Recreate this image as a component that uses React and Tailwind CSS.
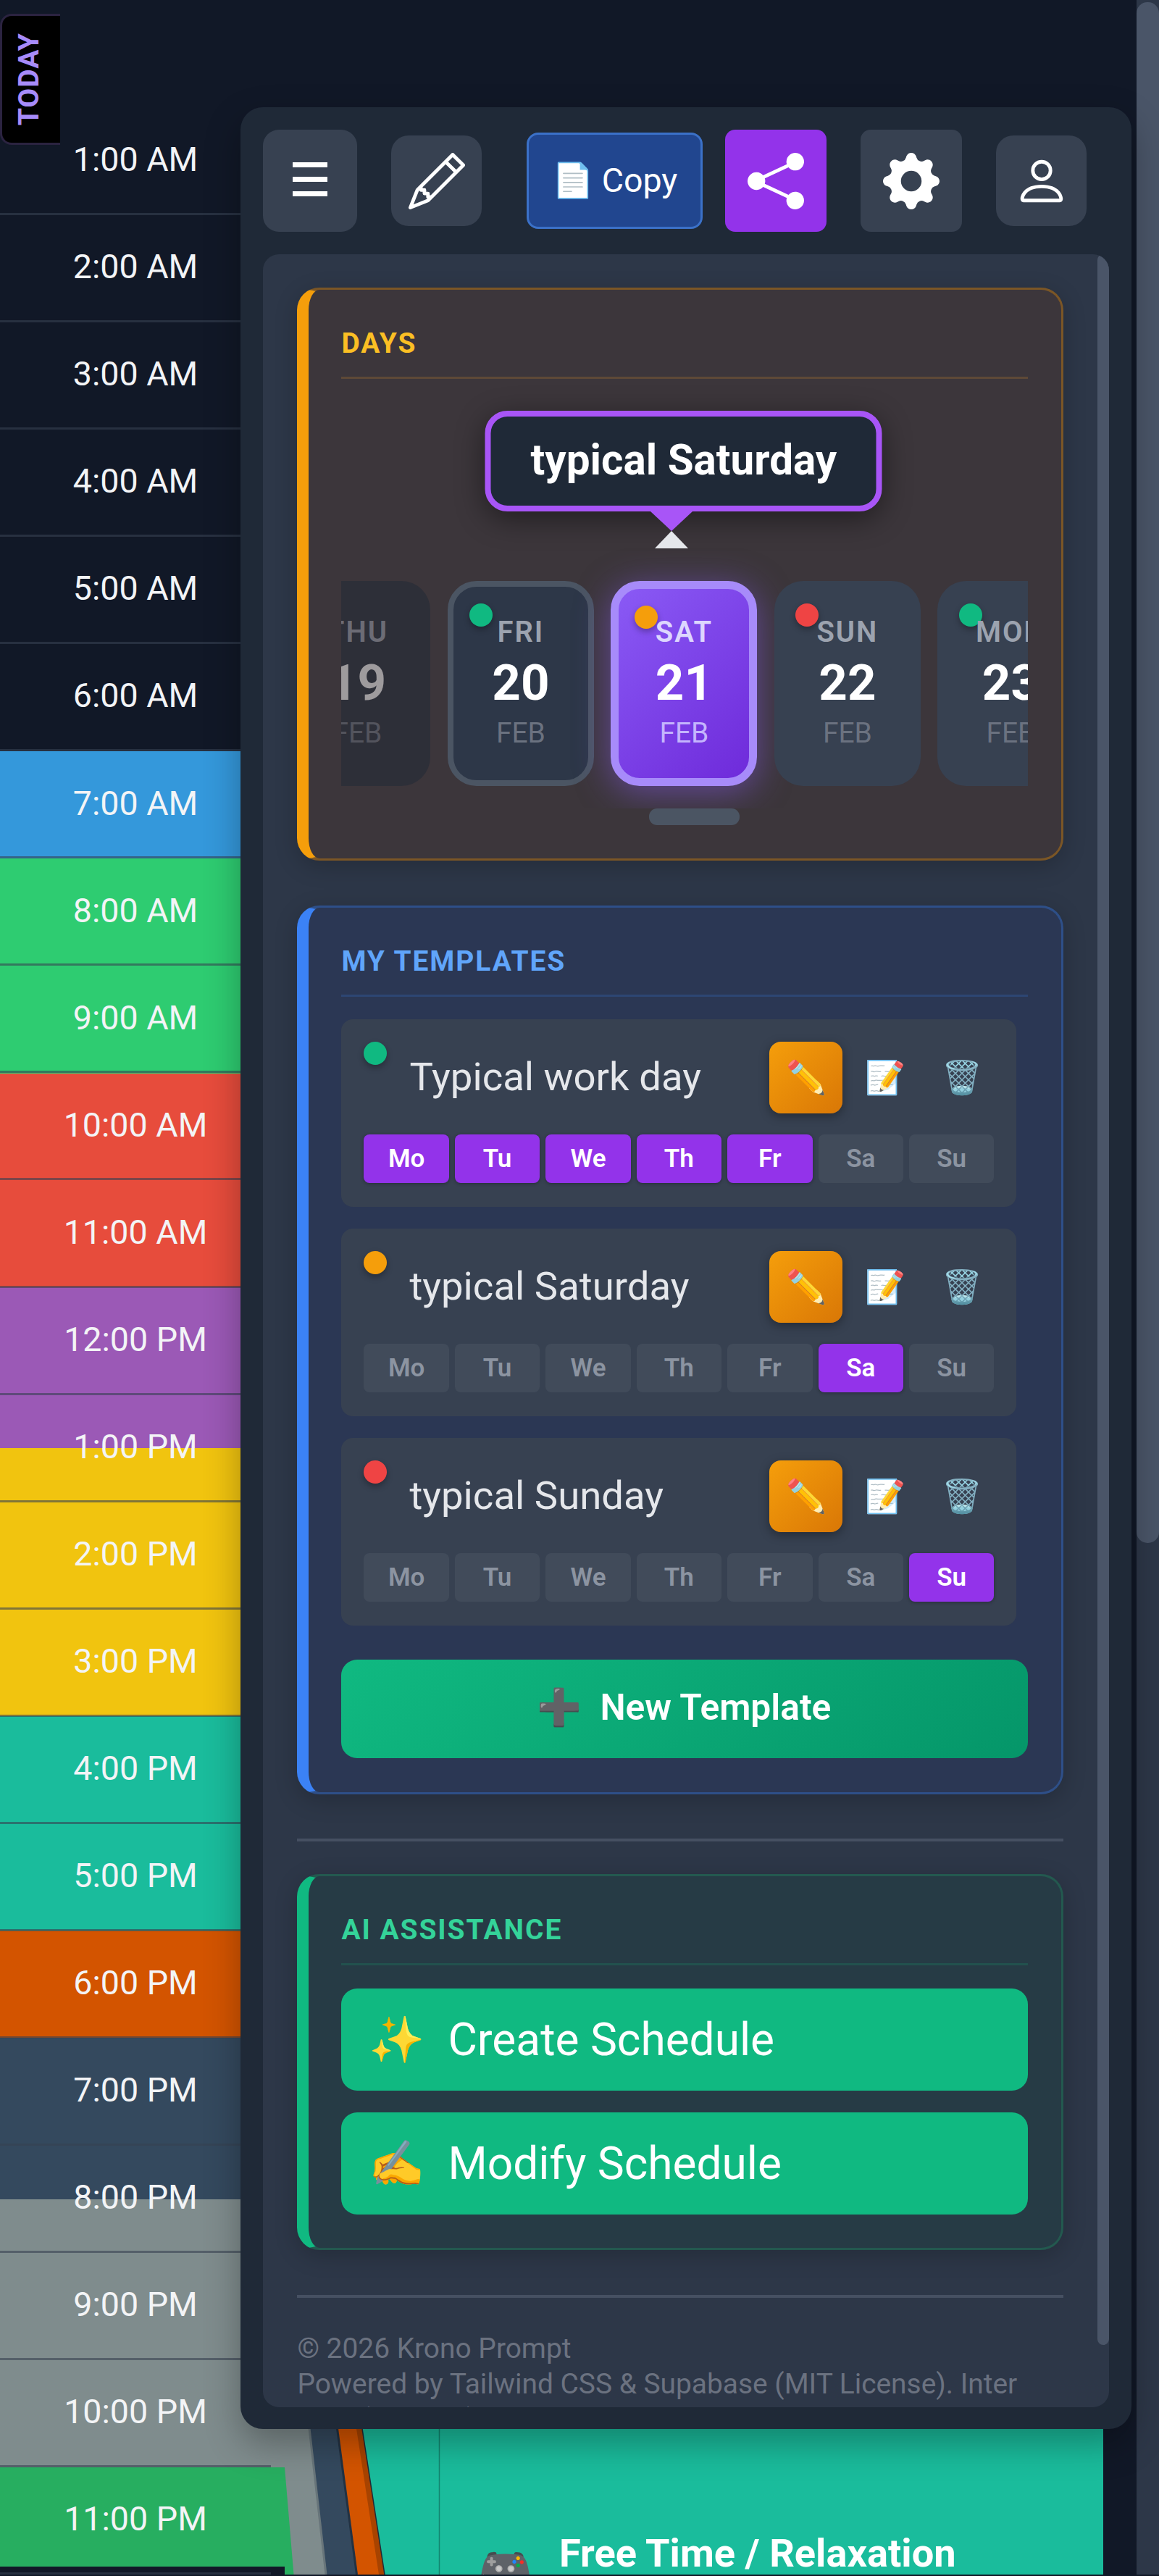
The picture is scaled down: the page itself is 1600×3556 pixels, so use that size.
import React from "react";
import { BsPencil, BsShareFill, BsGearFill, BsPerson } from "react-icons/bs";

const HOURS = [
  "1:00 AM", "2:00 AM", "3:00 AM", "4:00 AM", "5:00 AM", "6:00 AM", "7:00 AM", "8:00 AM",
  "9:00 AM", "10:00 AM", "11:00 AM", "12:00 PM", "1:00 PM", "2:00 PM", "3:00 PM", "4:00 PM",
  "5:00 PM", "6:00 PM", "7:00 PM", "8:00 PM", "9:00 PM", "10:00 PM", "11:00 PM",
];

const BLOCKS = [
  "h-[1037px]",
  "h-[148px] bg-[#3498db]",
  "h-[297px] bg-[#2ecc71]",
  "h-[295px] bg-[#e74c3c]",
  "h-[222px] bg-[#9b59b6]",
  "h-[370px] bg-[#f1c40f]",
  "h-[296px] bg-[#1abc9c]",
  "h-[148px] bg-[#d35400]",
  "h-[223px] bg-[#34495e]",
  "h-[370px] bg-[#7f8c8d]",
  "h-[137px] bg-[#27ae60]",
];

function Timeline() {
  return (
    <div className="relative h-[3556px] w-[374px]">
      <div className="flex flex-col">
        {BLOCKS.map((b) => (
          <div key={b} className={b} />
        ))}
      </div>
      <div className="absolute inset-x-0 top-[149px] flex flex-col">
        {HOURS.map((h) => (
          <div
            key={h}
            className="flex h-[148.05px] items-center justify-center border-b-[3px] border-[#374151]/60 pb-[2px] text-[46.600px] leading-none text-[#f3f4f6]"
          >
            {h}
          </div>
        ))}
      </div>
    </div>
  );
}

function FanShapes() {
  return (
    <svg className="absolute left-0 top-[3330px]" width="1524" height="224" viewBox="0 3330 1524 224">
      <rect x="420" y="3330" width="1103" height="224" fill="#1abc9c" />
      <path d="M606.5 3330V3554" stroke="#12856f" strokeWidth="1.5" />
      <path d="M460 3330H496.500L531 3554H460Z" fill="#a84300" />
      <path d="M460 3330H488.500L523 3554H460Z" fill="#d35400" />
      <path d="M496.500 3330L531 3554" stroke="#1f2937" strokeWidth="1.5" />
      <path d="M420 3330H462.500L492.500 3554H420Z" fill="#34495e" />
      <path d="M462.500 3330L492.500 3554" stroke="#223243" strokeWidth="3" />
      <path d="M374 3330H424.500L450 3554H393V3406H374Z" fill="#7f8c8d" />
      <path d="M424.500 3330L450 3554" stroke="#68757a" strokeWidth="3" />
      <path d="M373 3406H393L405.500 3554H393V3543H373Z" fill="#27ae60" />
    </svg>
  );
}

function Toolbar() {
  return (
    <div className="flex h-[203px] items-center pl-[31px] text-white">
      <button className="flex h-[141px] w-[130px] flex-col items-center justify-center gap-[12.500px] rounded-[22px] bg-[#374151] pb-[4px]">
        <span className="h-[7.500px] w-[48px] bg-white" />
        <span className="h-[7.500px] w-[48px] bg-white" />
        <span className="h-[7.500px] w-[48px] bg-white" />
      </button>
      <button className="ml-[47px] flex h-[125px] w-[125px] items-center justify-center rounded-[24px] bg-[#374151]">
        <BsPencil size={78} />
      </button>
      <button className="ml-[62px] flex h-[133px] w-[243px] items-center justify-center gap-[11px] rounded-[16px] border-[3px] border-[#3b71c8] bg-[#21468f] text-[46.500px] leading-none">
        <span>📄</span>
        <span>Copy</span>
      </button>
      <button className="ml-[31px] flex h-[141px] w-[140px] items-center justify-center rounded-[14px] bg-[#9333ea]">
        <BsShareFill size={78} />
      </button>
      <button className="ml-[47px] flex h-[141px] w-[140px] items-center justify-center rounded-[14px] bg-[#374151]">
        <BsGearFill size={78} />
      </button>
      <button className="ml-[47px] flex h-[125px] w-[125px] items-center justify-center rounded-[24px] bg-[#374151]">
        <BsPerson size={78} />
      </button>
    </div>
  );
}

function Card({ tone, title, titleTone, className, children }) {
  return (
    <section
      className={`w-[1058px] rounded-[31px] border-[3px] border-l-[16px] pl-[45px] pr-[46px] pt-[45px] shadow-[0_8px_32px_rgba(0,0,0,0.2)] ${tone} ${className}`}
    >
      <h3 className={`h-[78px] border-b-[3px] text-[38.900px] font-bold leading-[58px] tracking-[1.950px] ${titleTone}`}>
        {title}
      </h3>
      {children}
    </section>
  );
}

function DayCell({ name, num, box, dot, nameTone, monthTone }) {
  return (
    <div className={`relative flex h-[283px] w-[202px] shrink-0 flex-col items-center justify-center rounded-[40px] pb-[4px] ${box}`}>
      {dot && <span className={`absolute h-8 w-8 rounded-full shadow-[0_4px_8px_rgba(0,0,0,0.3)] ${dot}`} />}
      <span className={`relative text-[40px] font-semibold leading-[56px] tracking-[2px] ${nameTone}`}>{name}</span>
      <span className="text-[69px] font-bold leading-[84px] text-white">{num}</span>
      <span className={`text-[39px] leading-[54px] ${monthTone}`}>FEB</span>
    </div>
  );
}

function Days() {
  return (
    <Card
      title="DAYS"
      className="h-[791px]"
      tone="bg-[#3c363b] border-[#7b5626] border-l-[#f59e0b]"
      titleTone="text-[#fbbf24] border-[#5e4937]"
    >
      <div className="mt-[44px] flex flex-col items-center">
        <div className="flex h-[139px] w-[548px] -translate-x-[1.500px] items-center justify-center rounded-[31px] border-[8px] border-[#a855f7] bg-[#1f2937] pb-[4px] text-[58.400px] font-bold leading-none text-white shadow-[0_10px_40px_rgba(0,0,0,0.45)]">
          typical Saturday
        </div>
        <svg className="-translate-x-[18px]" width="58" height="51" viewBox="0 0 58 51">
          <path d="M0 0H58L29 27Z" fill="#a855f7" />
          <path d="M6 51L29 27L52 51Z" fill="#e5e7eb" />
        </svg>
      </div>
      <div className="flex h-[359px] gap-[23.500px] overflow-hidden pt-[45px]">
        <div className="-ml-[79px] shrink-0">
          <DayCell name="THU" num="19" box="bg-[#1f2937] opacity-50" nameTone="text-[#9ca3af]" monthTone="text-[#6b7280]" />
        </div>
        <DayCell name="FRI" num="20" box="bg-[#2d3748] border-[8px] border-[#4b5563]" dot="left-[22px] top-[23px] bg-[#10b981]" nameTone="text-[#9ca3af]" monthTone="text-[#6b7280]" />
        <DayCell name="SAT" num="21" box="bg-[linear-gradient(135deg,#8b5cf6,#6d28d9)] border-[11px] border-[#a78bfa] bg-origin-border shadow-[0_8px_47px_rgba(139,92,246,0.5)]" dot="left-[22px] top-[23px] bg-[#f59e0b]" nameTone="text-[#ddd6fe]" monthTone="text-[#c4b5fd]" />
        <DayCell name="SUN" num="22" box="bg-[#374151]" dot="left-[29px] top-[31px] bg-[#ef4444]" nameTone="text-[#9ca3af]" monthTone="text-[#6b7280]" />
        <DayCell name="MON" num="23" box="bg-[#374151]" dot="left-[30px] top-[31px] bg-[#10b981]" nameTone="text-[#9ca3af]" monthTone="text-[#6b7280]" />
      </div>
      <div className="ml-[424.500px] h-[23px] w-[125px] rounded-[11px] bg-[#4b5563]" />
    </Card>
  );
}

const WEEK = ["Mo", "Tu", "We", "Th", "Fr", "Sa", "Su"];

function Template({ name, dot, active }) {
  return (
    <div className="h-[258.500px] w-[932px] rounded-[16px] bg-[#374151] px-[31px] pt-[31px]">
      <div className="flex h-[99px]">
        <span className={`h-8 w-8 shrink-0 rounded-full shadow-[0_4px_8px_rgba(0,0,0,0.3)] ${dot}`} />
        <span className="ml-[31px] w-[497px] shrink-0 text-[54.500px] leading-[96px] text-[#e5e7eb]">{name}</span>
        <span className="flex w-[101px] shrink-0 items-center justify-center rounded-[16px] bg-[linear-gradient(135deg,#f59e0b,#d97706)] text-[45px] leading-none shadow-[0_4px_14px_rgba(0,0,0,0.35)]">✏️</span>
        <span className="ml-[8px] flex w-[101px] shrink-0 items-center justify-center text-[45px] leading-none">📝</span>
        <span className="ml-[5px] flex w-[101px] shrink-0 items-center justify-center text-[45px] leading-none">🗑️</span>
      </div>
      <div className="mt-[29px] grid h-[67px] grid-cols-7 gap-2">
        {WEEK.map((d) => (
          <span
            key={d}
            className={`flex items-center justify-center rounded-[8px] text-[35px] font-semibold leading-none ${
              active.includes(d) ? "bg-[#9333ea] text-white shadow-[0_1px_5px_rgba(0,0,0,0.3)]" : "bg-[#4b5563]/50 text-[#8c94a1]"
            }`}
          >
            {d}
          </span>
        ))}
      </div>
    </div>
  );
}

function Templates() {
  return (
    <Card
      title="MY TEMPLATES"
      className="mt-[62px] h-[1227px]"
      tone="bg-[#2b3754] border-[#2e4f88] border-l-[#3b82f6]"
      titleTone="text-[#60a5fa] border-[#2d4673]"
    >
      <div className="mt-[31px] flex flex-col gap-[30.500px]">
        <Template name="Typical work day" dot="bg-[#10b981]" active={["Mo", "Tu", "We", "Th", "Fr"]} />
        <Template name="typical Saturday" dot="bg-[#f59e0b]" active={["Sa"]} />
        <Template name="typical Sunday" dot="bg-[#ef4444]" active={["Su"]} />
      </div>
      <button className="mt-[47px] flex h-[136px] w-[948px] items-center justify-center gap-[25px] rounded-[22px] bg-[linear-gradient(135deg,#10b981,#059669)] pb-[2px] pr-[2px] text-[49.700px] font-semibold leading-none text-white">
        <span>➕</span>
        <span>New Template</span>
      </button>
    </Card>
  );
}

function Assistance() {
  return (
    <Card
      title="AI ASSISTANCE"
      className="mt-[45px] h-[519px]"
      tone="bg-[#263b45] border-[#23594f] border-l-[#10b981]"
      titleTone="text-[#34d399] border-[#22514e]"
    >
      <div className="mt-[32px] flex flex-col gap-[30px] text-[62.200px] leading-none text-white">
        <button className="flex h-[141px] w-[948px] items-center gap-[32px] rounded-[22px] bg-[#10b981] pl-[38px]">
          <span>✨</span>
          <span>Create Schedule</span>
        </button>
        <button className="flex h-[141px] w-[948px] items-center gap-[32px] rounded-[22px] bg-[#10b981] pl-[38px]">
          <span>✍️</span>
          <span>Modify Schedule</span>
        </button>
      </div>
    </Card>
  );
}

export default function App() {
  return (
    <div className="relative h-[3556px] w-[1600px] overflow-hidden bg-[#111827] font-['Roboto',sans-serif]">
      <div className="flex justify-between">
        <Timeline />
        <div className="h-[3554px] w-[31px] bg-[#2d3748] pt-[3px]">
          <div className="h-[2127px] rounded-[15px] bg-[#4a5568]" />
        </div>
      </div>
      <FanShapes />
      <div className="absolute left-[659px] top-[3480px] flex h-[74px] items-start overflow-hidden text-white">
        <span className="mt-[27px] w-[113px] text-[62px] leading-[80px]">🎮</span>
        <span className="text-[54.200px] font-bold leading-[90px]">Free Time / Relaxation</span>
      </div>
      <div className="absolute left-0 top-[19px] flex h-[181px] w-[83px] items-center justify-center rounded-l-[16px] border-[3px] border-r-0 border-[#2b2340] bg-black pr-[6px]">
        <span className="rotate-180 text-[39px] font-bold leading-none tracking-[1px] text-[#a78bfa] [writing-mode:vertical-rl]">TODAY</span>
      </div>
      <main className="absolute left-[332px] top-[148px] h-[3205px] w-[1230px] rounded-[31px] bg-[#1f2937] shadow-[0_20px_50px_rgba(0,0,0,0.3)]">
        <Toolbar />
        <div className="relative ml-[31px] h-[2972px] w-[1168px] overflow-hidden rounded-[22px] bg-[#2d3748] pl-[47.400px] pt-[46.400px]">
          <Days />
          <Templates />
          <hr className="mt-[61px] h-[4px] w-[1058px] border-0 bg-[#465062]" />
          <Assistance />
          <hr className="mt-[62px] h-[4px] w-[1058px] border-0 bg-[#465062]" />
          <p className="mt-[46px] w-[1058px] text-[38.900px] leading-[48.700px] text-[#6b7280]">
            © 2026 Krono Prompt
            <br />
            Powered by Tailwind CSS &amp; Supabase (MIT License). Inter
            <br />
            Font (SIL OFL).
          </p>
          <div className="absolute right-0 top-0 h-[2886px] w-[16px] rounded-[8px] bg-[#4a5568]" />
        </div>
      </main>
    </div>
  );
}
